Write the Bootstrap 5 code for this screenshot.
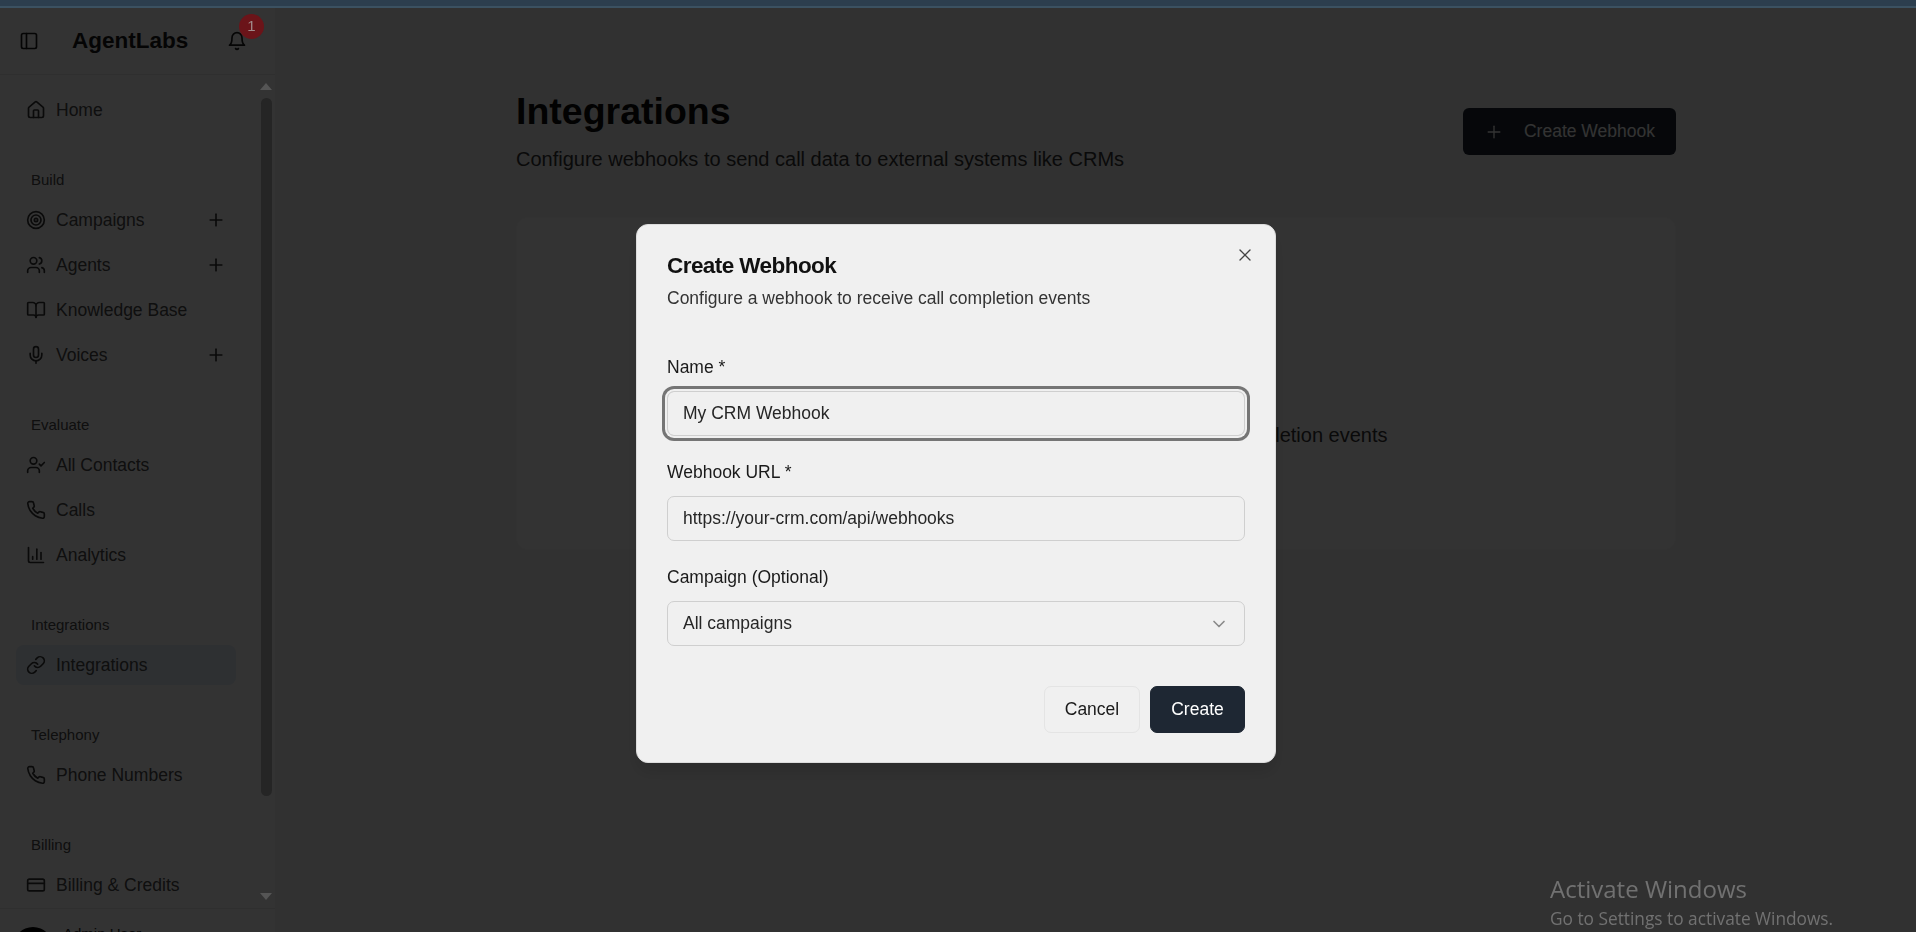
<!DOCTYPE html>
<html lang="en">
<head>
<meta charset="utf-8">
<title>Integrations</title>
<link href="https://cdn.jsdelivr.net/npm/bootstrap@5.3.0/dist/css/bootstrap.min.css" rel="stylesheet">
<style>
html,body{height:100%;}
body{font-family:"Liberation Sans",Arial,sans-serif;background:#fff;color:#0a0a0a;overflow:hidden;font-size:17.5px;}
.topstrip{height:8px;background:#2c3e4e;border-bottom:2px solid #3b5161;position:relative;z-index:1060;}
.shell{height:924px;overflow:hidden;background:#f4f4f4;}
.side{width:276px;flex:none;background:#fff;border-right:1px solid #f2f2f2;height:924px;overflow:hidden;}
.sidehead{height:67px;flex:none;border-bottom:1px solid #e8e8e8;padding:0 28px 0 19px;color:#1a1a1a;}
.brand{font-size:22.5px;font-weight:700;margin-left:33px;line-height:1;}
.bellwrap{position:relative;margin-left:auto;width:20px;height:20px;}
.bellwrap svg{display:block;}
.bellbadge{position:absolute;top:-17px;left:12px;z-index:1060;width:25px;height:25px;background:#6b1419;color:#a08a8a;font-size:15px;font-weight:400;border-radius:50%;}
.sidebody{height:833px;flex:none;overflow:hidden;}
.navcol{width:260px;flex:none;padding:15px 24px 0 16px;}
.navitem{height:40px;margin-bottom:5px;padding:0 10px;gap:10px;border-radius:8px;color:#4a4a4a;font-size:17.5px;text-decoration:none;}
.navitem svg{color:#333;flex:none;}
.navitem.on{background:#e5edf8;}
.navitem .grow{flex:1;}
.grouplbl{height:40px;margin-top:30px;padding-left:15px;color:#4a4a4a;font-size:15px;}
.barcol{width:12px;flex:none;margin-top:8px;position:relative;z-index:1060;}
.arr{width:0;height:0;border-left:6.5px solid transparent;border-right:6.5px solid transparent;}
.arr.up{border-bottom:7px solid #555;}
.arr.dn{border-top:7px solid #555;margin-top:97px;}
.thumb{width:11px;height:698px;background:#252525;border-radius:6px;margin-top:8px;}
.sidefoot{border-top:1px solid #e8e8e8;padding:18px 13px 0;gap:10px;}
.avatar{width:40px;height:40px;border-radius:50%;background:#000;flex:none;}
.adminname{font-size:15px;line-height:1;margin-top:-1px;color:#262626;}
.mainpane{flex:1;min-width:0;padding:0 240px;}
.pagehead{padding-top:81px;}
.pagetitle{font-size:37.5px;font-weight:700;line-height:45px;margin:0;color:#0a0a0a;}
.pagesub{font-size:20px;line-height:30px;color:#333;margin:10px 0 0;}
.btnnew{width:213px;height:47px;margin-top:19px;background:#1e2733;color:#fff;border:0;border-radius:6px;font-size:17.5px;gap:20px;}
.btnnew svg{stroke-width:1.6;}
.emptycard{height:333px;margin-top:43px;border:1px solid #fafafa;border-radius:12px;background:#fff;}
.emptytxt{font-size:20px;line-height:30px;color:#333;padding:202px 0 0 5px;text-align:center;margin:0;}
.shade{background:#000;opacity:.8;}
.dlg{width:640px;max-width:640px;margin:224px 0 0 636px;}
.dlgbox{height:539px;background:#f0f0f0;border:1px solid #dcdcdc;border-radius:12px;padding:0 30px;box-shadow:0 10px 15px rgba(0,0,0,.1);display:block;}
.dlghead{padding:0;position:relative;display:block;border:0;}
.dlgtitle{font-size:22.5px;font-weight:700;letter-spacing:-.025em;line-height:24px;padding-top:29px;margin:0;color:#111;}
.dlgsub{font-size:17.5px;line-height:24px;color:#333;margin:8px 0 0;}
.xbtn{position:absolute;top:20px;right:-10px;background:none;border:0;padding:0;line-height:0;color:#444;}
.xbtn svg{stroke-width:1.6;}
.fldlbl{font-size:17.5px;line-height:20px;color:#1a1a1a;margin:26px 0 14px;display:block;}
.fldlbl.lead1{margin-top:47px;}
.fld{height:45px;font-size:17.5px;padding:0 15px;background-color:#f0f0f0;border:1px solid #cfcfcf;border-radius:7px;color:#262626;box-shadow:none;}
.fld.focused{box-shadow:0 0 0 2px #f0f0f0,0 0 0 5px #757575;}
.chev{margin-left:auto;color:#8a8a8a;}
.btnrow{margin-top:40px;gap:10px;}
.btncancel,.btncreate{height:47px;font-size:17.5px;border-radius:7px;padding:0;}
.btncancel{width:96px;background:#f0f0f0;border:1px solid #e4e4e4;color:#1a1a1a;}
.btncreate{width:95px;background:#1e2733;border:1px solid #1e2733;color:#fff;}
.activate{position:fixed;left:1550px;top:875px;z-index:1070;font-family:"Open Sans",sans-serif;color:#717171;line-height:1.2;}
.act1{font-size:24px;}
.act2{font-size:17.3px;margin-top:5px;}
</style>
</head>
<body>
<div class="topstrip"></div>
<div class="shell d-flex">
  <aside class="side d-flex flex-column">
    <div class="sidehead d-flex align-items-center">
      <svg width="20" height="20" viewBox="0 0 24 24" fill="none" stroke="currentColor" stroke-width="2" stroke-linecap="round" stroke-linejoin="round"><rect x="3" y="3" width="18" height="18" rx="2"/><path d="M9 3v18"/></svg>
      <span class="brand">AgentLabs</span>
      <div class="bellwrap">
        <svg width="20" height="20" viewBox="0 0 24 24" fill="none" stroke="currentColor" stroke-width="2" stroke-linecap="round" stroke-linejoin="round"><path d="M6 8a6 6 0 0 1 12 0c0 7 3 9 3 9H3s3-2 3-9"/><path d="M10.3 21a1.94 1.94 0 0 0 3.4 0"/></svg>
        <span class="bellbadge d-flex align-items-center justify-content-center">1</span>
      </div>
    </div>
    <div class="sidebody d-flex">
      <nav class="navcol">
        <a class="navitem d-flex align-items-center" href="#"><svg width="20" height="20" viewBox="0 0 24 24" fill="none" stroke="currentColor" stroke-width="2" stroke-linecap="round" stroke-linejoin="round"><path d="M15 21v-8a1 1 0 0 0-1-1h-4a1 1 0 0 0-1 1v8"/><path d="M3 10a2 2 0 0 1 .709-1.528l7-5.999a2 2 0 0 1 2.582 0l7 5.999A2 2 0 0 1 21 10v9a2 2 0 0 1-2 2H5a2 2 0 0 1-2-2z"/></svg><span>Home</span></a>
        <div class="grouplbl d-flex align-items-center">Build</div>
        <a class="navitem d-flex align-items-center" href="#"><svg width="20" height="20" viewBox="0 0 24 24" fill="none" stroke="currentColor" stroke-width="2" stroke-linecap="round" stroke-linejoin="round"><circle cx="12" cy="12" r="10"/><circle cx="12" cy="12" r="6"/><circle cx="12" cy="12" r="2"/></svg><span class="grow">Campaigns</span><svg width="20" height="20" viewBox="0 0 24 24" fill="none" stroke="currentColor" stroke-width="2" stroke-linecap="round" stroke-linejoin="round"><path d="M5 12h14"/><path d="M12 5v14"/></svg></a>
        <a class="navitem d-flex align-items-center" href="#"><svg width="20" height="20" viewBox="0 0 24 24" fill="none" stroke="currentColor" stroke-width="2" stroke-linecap="round" stroke-linejoin="round"><path d="M16 21v-2a4 4 0 0 0-4-4H6a4 4 0 0 0-4 4v2"/><circle cx="9" cy="7" r="4"/><path d="M22 21v-2a4 4 0 0 0-3-3.87"/><path d="M16 3.13a4 4 0 0 1 0 7.75"/></svg><span class="grow">Agents</span><svg width="20" height="20" viewBox="0 0 24 24" fill="none" stroke="currentColor" stroke-width="2" stroke-linecap="round" stroke-linejoin="round"><path d="M5 12h14"/><path d="M12 5v14"/></svg></a>
        <a class="navitem d-flex align-items-center" href="#"><svg width="20" height="20" viewBox="0 0 24 24" fill="none" stroke="currentColor" stroke-width="2" stroke-linecap="round" stroke-linejoin="round"><path d="M12 7v14"/><path d="M3 18a1 1 0 0 1-1-1V4a1 1 0 0 1 1-1h5a4 4 0 0 1 4 4 4 4 0 0 1 4-4h5a1 1 0 0 1 1 1v13a1 1 0 0 1-1 1h-6a3 3 0 0 0-3 3 3 3 0 0 0-3-3z"/></svg><span>Knowledge Base</span></a>
        <a class="navitem d-flex align-items-center" href="#"><svg width="20" height="20" viewBox="0 0 24 24" fill="none" stroke="currentColor" stroke-width="2" stroke-linecap="round" stroke-linejoin="round"><path d="M12 2a3 3 0 0 0-3 3v7a3 3 0 0 0 6 0V5a3 3 0 0 0-3-3Z"/><path d="M19 10v2a7 7 0 0 1-14 0v-2"/><path d="M12 19v3"/></svg><span class="grow">Voices</span><svg width="20" height="20" viewBox="0 0 24 24" fill="none" stroke="currentColor" stroke-width="2" stroke-linecap="round" stroke-linejoin="round"><path d="M5 12h14"/><path d="M12 5v14"/></svg></a>
        <div class="grouplbl d-flex align-items-center">Evaluate</div>
        <a class="navitem d-flex align-items-center" href="#"><svg width="20" height="20" viewBox="0 0 24 24" fill="none" stroke="currentColor" stroke-width="2" stroke-linecap="round" stroke-linejoin="round"><path d="M16 21v-2a4 4 0 0 0-4-4H6a4 4 0 0 0-4 4v2"/><circle cx="9" cy="7" r="4"/><path d="m16 11 2 2 4-4"/></svg><span>All Contacts</span></a>
        <a class="navitem d-flex align-items-center" href="#"><svg width="20" height="20" viewBox="0 0 24 24" fill="none" stroke="currentColor" stroke-width="2" stroke-linecap="round" stroke-linejoin="round"><path d="M22 16.92v3a2 2 0 0 1-2.18 2 19.79 19.79 0 0 1-8.63-3.07 19.5 19.5 0 0 1-6-6 19.79 19.79 0 0 1-3.07-8.67A2 2 0 0 1 4.11 2h3a2 2 0 0 1 2 1.72 12.84 12.84 0 0 0 .7 2.81 2 2 0 0 1-.45 2.11L8.09 9.91a16 16 0 0 0 6 6l1.27-1.27a2 2 0 0 1 2.11-.45 12.84 12.84 0 0 0 2.81.7A2 2 0 0 1 22 16.92z"/></svg><span>Calls</span></a>
        <a class="navitem d-flex align-items-center" href="#"><svg width="20" height="20" viewBox="0 0 24 24" fill="none" stroke="currentColor" stroke-width="2" stroke-linecap="round" stroke-linejoin="round"><path d="M3 3v16a2 2 0 0 0 2 2h16"/><path d="M18 17V9"/><path d="M13 17V5"/><path d="M8 17v-3"/></svg><span>Analytics</span></a>
        <div class="grouplbl d-flex align-items-center">Integrations</div>
        <a class="navitem on d-flex align-items-center" href="#"><svg width="20" height="20" viewBox="0 0 24 24" fill="none" stroke="currentColor" stroke-width="2" stroke-linecap="round" stroke-linejoin="round"><path d="M10 13a5 5 0 0 0 7.54.54l3-3a5 5 0 0 0-7.07-7.07l-1.72 1.71"/><path d="M14 11a5 5 0 0 0-7.54-.54l-3 3a5 5 0 0 0 7.07 7.07l1.71-1.71"/></svg><span>Integrations</span></a>
        <div class="grouplbl d-flex align-items-center">Telephony</div>
        <a class="navitem d-flex align-items-center" href="#"><svg width="20" height="20" viewBox="0 0 24 24" fill="none" stroke="currentColor" stroke-width="2" stroke-linecap="round" stroke-linejoin="round"><path d="M22 16.92v3a2 2 0 0 1-2.18 2 19.79 19.79 0 0 1-8.63-3.07 19.5 19.5 0 0 1-6-6 19.79 19.79 0 0 1-3.07-8.67A2 2 0 0 1 4.11 2h3a2 2 0 0 1 2 1.72 12.84 12.84 0 0 0 .7 2.81 2 2 0 0 1-.45 2.11L8.09 9.91a16 16 0 0 0 6 6l1.27-1.27a2 2 0 0 1 2.11-.45 12.84 12.84 0 0 0 2.81.7A2 2 0 0 1 22 16.92z"/></svg><span>Phone Numbers</span></a>
        <div class="grouplbl d-flex align-items-center">Billing</div>
        <a class="navitem d-flex align-items-center" href="#"><svg width="20" height="20" viewBox="0 0 24 24" fill="none" stroke="currentColor" stroke-width="2" stroke-linecap="round" stroke-linejoin="round"><rect x="2" y="5" width="20" height="14" rx="2"/><path d="M2 10h20"/></svg><span>Billing &amp; Credits</span></a>
      </nav>
      <div class="barcol d-flex flex-column align-items-center">
        <div class="arr up"></div>
        <div class="thumb"></div>
        <div class="arr dn"></div>
      </div>
    </div>
    <div class="sidefoot d-flex">
      <div class="avatar"></div>
      <div class="adminname">Admin User</div>
    </div>
  </aside>
  <main class="mainpane">
    <div class="pagehead d-flex justify-content-between align-items-start">
      <div>
        <h1 class="pagetitle">Integrations</h1>
        <p class="pagesub">Configure webhooks to send call data to external systems like CRMs</p>
      </div>
      <button class="btnnew btn d-flex align-items-center justify-content-center" type="button"><svg width="20" height="20" viewBox="0 0 24 24" fill="none" stroke="currentColor" stroke-linecap="round" stroke-linejoin="round"><path d="M5 12h14"/><path d="M12 5v14"/></svg>Create Webhook</button>
    </div>
    <div class="emptycard"><p class="emptytxt">Create your first webhook to get notified of call completion events</p></div>
  </main>
</div>

<div class="modal-backdrop shade"></div>
<div class="modal d-block" tabindex="-1">
  <div class="modal-dialog dlg">
    <div class="modal-content dlgbox">
      <div class="modal-header dlghead">
        <h5 class="modal-title dlgtitle">Create Webhook</h5>
        <p class="dlgsub">Configure a webhook to receive call completion events</p>
        <button class="xbtn" type="button" aria-label="Close"><svg width="20" height="20" viewBox="0 0 24 24" fill="none" stroke="currentColor" stroke-linecap="round" stroke-linejoin="round"><path d="M18 6 6 18"/><path d="m6 6 12 12"/></svg></button>
      </div>
      <div class="modal-body p-0">
        <label class="fldlbl lead1">Name *</label>
        <input class="form-control fld focused" type="text" value="My CRM Webhook">
        <label class="fldlbl">Webhook URL *</label>
        <input class="form-control fld" type="text" value="https://your-crm.com/api/webhooks">
        <label class="fldlbl">Campaign (Optional)</label>
        <div class="form-control fld d-flex align-items-center">All campaigns<svg class="chev" width="20" height="20" viewBox="0 0 24 24" fill="none" stroke="currentColor" stroke-width="2" stroke-linecap="round" stroke-linejoin="round"><path d="m6 9 6 6 6-6"/></svg></div>
        <div class="btnrow d-flex justify-content-end">
          <button class="btn btncancel" type="button">Cancel</button>
          <button class="btn btncreate" type="button">Create</button>
        </div>
      </div>
    </div>
  </div>
</div>
<div class="activate"><div class="act1">Activate Windows</div><div class="act2">Go to Settings to activate Windows.</div></div>
<script src="https://cdn.jsdelivr.net/npm/bootstrap@5.3.0/dist/js/bootstrap.bundle.min.js"></script>
</body>
</html>
